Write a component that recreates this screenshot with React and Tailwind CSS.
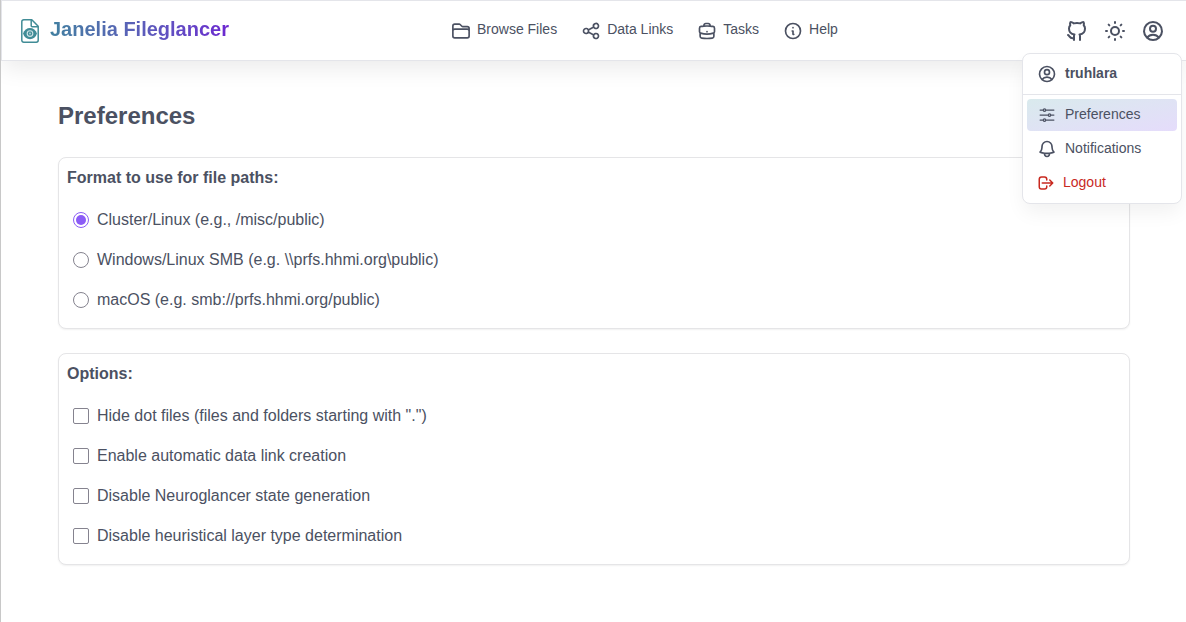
import {
  HiOutlineFolder,
  HiOutlineBriefcase,
  HiOutlineUserCircle,
  HiOutlineAdjustmentsHorizontal,
  HiOutlineBell,
} from 'react-icons/hi2';
import { HiOutlineInformationCircle, HiOutlineLogout, HiOutlineShare, HiOutlineSun } from 'react-icons/hi';
import { TbBrandGithub } from 'react-icons/tb';

function Logo() {
  return (
    <svg className="h-6 w-[18px] text-[#418c96]" viewBox="0 0 18 24" fill="none" stroke="currentColor" strokeWidth="1.5" strokeLinejoin="round">
      <path d="M2.7.8h8.1l6.4 6.5v14a1.9 1.9 0 0 1-1.9 1.9H2.7A1.9 1.9 0 0 1 .8 21.3V2.7A1.9 1.9 0 0 1 2.7.8Z" />
      <path d="M10.2.8v5.900a1 1 0 0 0 1 1h5.900" />
      <path d="M2 14.600C3.200 11 5.800 9 9 9s5.800 2 7 5.600c-1.200 3.600-3.800 5.600-7 5.600s-5.800-2-7-5.600Z" fill="currentColor" stroke="none" />
      <circle cx="9" cy="14.600" r="2.800" stroke="#cfe3e6" strokeWidth="1.100" />
      <circle cx="9" cy="14.600" r="1" fill="#a9cdd2" stroke="none" />
    </svg>
  );
}

const links = [
  { label: 'Browse Files', Icon: HiOutlineFolder },
  { label: 'Data Links', Icon: HiOutlineShare },
  { label: 'Tasks', Icon: HiOutlineBriefcase },
  { label: 'Help', Icon: HiOutlineInformationCircle },
];

const formats = [
  'Cluster/Linux (e.g., /misc/public)',
  'Windows/Linux SMB (e.g. \\\\prfs.hhmi.org\\public)',
  'macOS (e.g. smb://prfs.hhmi.org/public)',
];

const options = [
  'Hide dot files (files and folders starting with ".")',
  'Enable automatic data link creation',
  'Disable Neuroglancer state generation',
  'Disable heuristical layer type determination',
];

function Card({ title, children }) {
  return (
    <section className="rounded-lg border border-[#e5e5e7] bg-white px-2 pt-2 pb-2 shadow-[0_1px_2px_rgba(0,0,0,0.06)]">
      <h2 className="mb-2.5 text-base leading-6 font-bold">{title}</h2>
      <div className="flex flex-col">{children}</div>
    </section>
  );
}

function UserMenu() {
  return (
    <div className="absolute top-[53px] right-1 w-40 rounded-lg border border-[#e4e5ea] bg-white text-sm shadow-[0_10px_20px_-2px_rgba(0,0,0,0.06)]">
      <div className="flex h-[41px] items-center border-b border-[#e4e5ea] pl-3.5 font-bold">
        <HiOutlineUserCircle className="size-5 stroke-2" />
        <span className="-mt-0.5 ml-2">truhlara</span>
      </div>
      <div className="flex flex-col gap-0.5 p-1">
        <div className="flex h-8 items-center rounded bg-linear-to-br from-[#d9eaed] to-[#e5dcfb] pl-2.5">
          <HiOutlineAdjustmentsHorizontal className="size-5" />
          <span className="-mt-0.5 ml-2">Preferences</span>
        </div>
        <div className="flex h-8 items-center pl-2.5">
          <HiOutlineBell className="size-5 stroke-2" />
          <span className="-mt-0.5 ml-2">Notifications</span>
        </div>
        <div className="flex h-8 items-center pl-2.5 text-[#c8291f]">
          <HiOutlineLogout className="size-[18px]" />
          <span className="-mt-0.5 ml-2">Logout</span>
        </div>
      </div>
    </div>
  );
}

export default function App() {
  return (
    <div className="relative h-[622px] overflow-hidden border-l border-[#c8c8c8] bg-white font-['Liberation_Sans',sans-serif] text-[#4b5162]">
      <header className="flex h-[61px] items-center border border-r-0 border-[#e4e5ea] bg-white pr-[21px] pl-[19px] shadow-[0_10px_22px_-2px_rgba(0,0,0,0.08)]">
        <div className="flex w-[430px] items-center">
          <Logo />
          <span className="-mt-1 ml-[11px] bg-linear-to-r from-[#4180a0] to-[#6b25d0] bg-clip-text text-xl font-bold text-transparent">
            Janelia Fileglancer
          </span>
        </div>
        <nav className="flex flex-1 items-center gap-6 text-sm">
          {links.map(({ label, Icon }) => (
            <a key={label} className="flex items-center gap-1.5">
              <Icon className="size-5 stroke-2" />
              <span className="-mt-1">{label}</span>
            </a>
          ))}
        </nav>
        <div className="flex items-center gap-3.5">
          <TbBrandGithub className="size-6" />
          <HiOutlineSun className="size-6" />
          <HiOutlineUserCircle className="size-6 stroke-2" />
        </div>
      </header>

      <main className="pt-[39px] pr-14 pl-[57px]">
        <h1 className="mb-[25px] text-2xl leading-8 font-bold">Preferences</h1>
        <div className="flex flex-col gap-6">
          <Card title="Format to use for file paths:">
            {formats.map((label, i) => (
              <label key={label} className="flex h-10 items-center gap-2 pl-1.5">
                {i === 0 ? (
                  <span className="flex size-4 items-center justify-center rounded-full border border-[#8b5cf6]">
                    <span className="size-2.5 rounded-full bg-[#8b5cf6]" />
                  </span>
                ) : (
                  <span className="size-4 rounded-full border border-[#85838f]" />
                )}
                <span>{label}</span>
              </label>
            ))}
          </Card>
          <Card title="Options:">
            {options.map((label) => (
              <label key={label} className="flex h-10 items-center gap-2 pl-1.5">
                <span className="size-4 rounded-xs border border-[#85838f]" />
                <span>{label}</span>
              </label>
            ))}
          </Card>
        </div>
      </main>
      <UserMenu />
    </div>
  );
}
